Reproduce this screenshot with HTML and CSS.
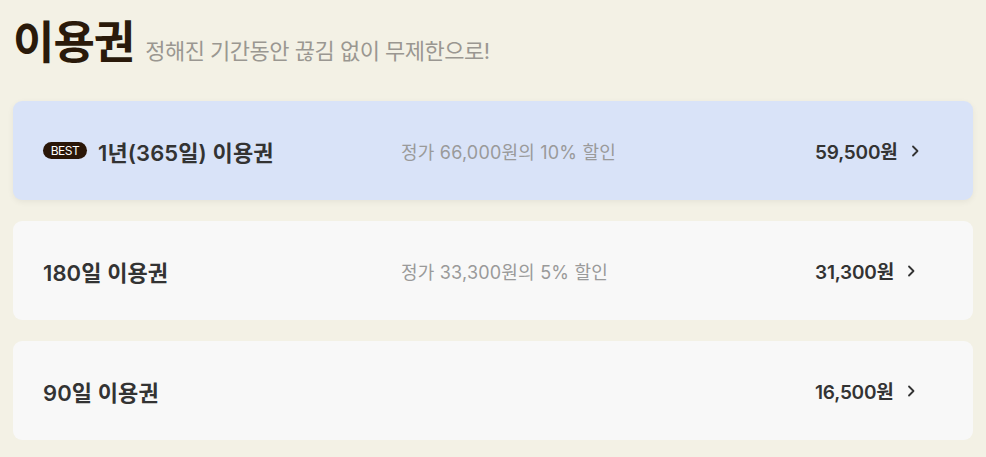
FILE: index.html
```html
<!DOCTYPE html>
<html lang="ko">
<head>
<meta charset="utf-8">
<link rel="stylesheet" href="styles.css">
</head>
<body>
<div class="page">
  <header class="head">
    <h1 class="title">이용권</h1>
    <p class="sub">정해진 기간동안 끊김 없이 무제한으로!</p>
  </header>
  <ul class="list">
    <li class="card best">
      <div class="name"><span class="badge">BEST</span>1년(365일) 이용권</div>
      <div class="disc">정가 66,000원의 10% 할인</div>
      <div class="price">59,500원<svg class="chev" viewBox="0 0 10 14" width="10" height="14"><path d="M3 2.5l4.5 4.5-4.5 4.5" fill="none" stroke="#333" stroke-width="1.8" stroke-linecap="round" stroke-linejoin="round"/></svg></div>
    </li>
    <li class="card">
      <div class="name">180일 이용권</div>
      <div class="disc">정가 33,300원의 5% 할인</div>
      <div class="price">31,300원<svg class="chev" viewBox="0 0 10 14" width="10" height="14"><path d="M3 2.5l4.5 4.5-4.5 4.5" fill="none" stroke="#333" stroke-width="1.8" stroke-linecap="round" stroke-linejoin="round"/></svg></div>
    </li>
    <li class="card">
      <div class="name">90일 이용권</div>
      <div class="disc"></div>
      <div class="price">16,500원<svg class="chev" viewBox="0 0 10 14" width="10" height="14"><path d="M3 2.5l4.5 4.5-4.5 4.5" fill="none" stroke="#333" stroke-width="1.8" stroke-linecap="round" stroke-linejoin="round"/></svg></div>
    </li>
  </ul>
</div>
</body>
</html>
```
FILE: styles.css
```css
* { box-sizing: border-box; }
html, body { margin: 0; padding: 0; }
body {
  background: #f3f1e5;
  font-family: Inter, "Noto Sans CJK KR", sans-serif;
  color: #333;
}
.page { padding: 0 13px; }
.head {
  display: flex;
  align-items: baseline;
  gap: 11px;
  height: 101px;
  padding-top: 10px;
}
.title {
  margin: 0;
  font-size: 45px;
  font-weight: 700;
  color: #2a1a0a;
  letter-spacing: -1px;
  line-height: 66px;
}
.sub {
  margin: 0;
  font-size: 22px;
  color: #9a9791;
  letter-spacing: -0.5px;
}
.list {
  list-style: none;
  margin: 0;
  padding: 0;
  display: flex;
  flex-direction: column;
  gap: 21px;
}
.card {
  height: 99px;
  border-radius: 9px;
  background: #f8f8f8;
  display: grid;
  grid-template-columns: 358px 414px 1fr;
  align-items: center;
  padding: 0 30px;
}
.card.best {
  background: #d9e3f8;
  box-shadow: 0 2px 6px rgba(0,0,0,0.06);
}
.name {
  display: flex;
  align-items: center;
  font-size: 22px;
  font-weight: 600;
  color: #333;
  letter-spacing: 0.1px;
}
.badge {
  display: inline-flex;
  align-items: center;
  justify-content: center;
  width: 44px;
  height: 17px;
  border-radius: 9px;
  background: #2a1608;
  color: #fff;
  font-family: Inter, sans-serif;
  font-size: 12px;
  font-weight: 400;
  letter-spacing: -0.5px;
  margin-right: 11px;
}
.disc {
  font-size: 18px;
  color: #9a9a9a;
  letter-spacing: 0.2px;
}
.price {
  display: flex;
  align-items: center;
  font-size: 19px;
  font-weight: 600;
  color: #333;
  letter-spacing: -0.2px;
}
.chev { margin-left: 12px; }
```
